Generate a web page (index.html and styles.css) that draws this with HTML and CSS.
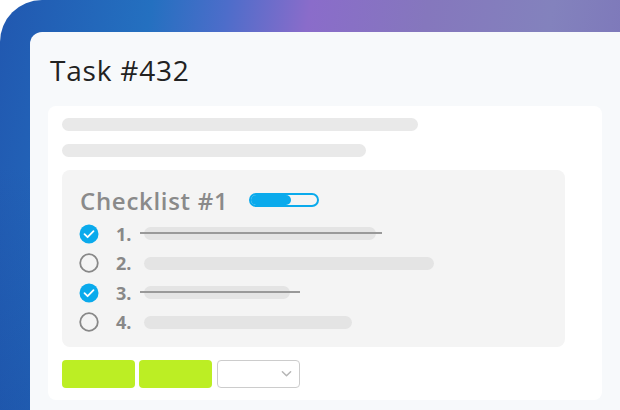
FILE: index.html
```html
<!DOCTYPE html>
<html>
<head>
<meta charset="utf-8">
<link rel="stylesheet" href="styles.css">
</head>
<body>
<div class="backdrop">
  <div class="card">
    <h1 class="title">Task #432</h1>
    <div class="panel">
      <div class="skel skel-1"></div>
      <div class="skel skel-2"></div>
      <div class="checklist">
        <div class="cl-head">
          <span class="cl-title">Checklist #1</span>
          <span class="progress"><span class="progress-fill"></span></span>
        </div>
        <div class="item">
          <svg class="box" viewBox="0 0 20 20"><circle cx="10" cy="10" r="9.5" fill="#0aaaec"/><polyline points="5.5,10.2 8.6,13.2 14.5,7.2" fill="none" stroke="#fff" stroke-width="1.8" stroke-linecap="round" stroke-linejoin="round"/></svg>
          <span class="num">1.</span>
          <span class="bar done" style="width:232px"></span>
        </div>
        <div class="item">
          <svg class="box" viewBox="0 0 20 20"><circle cx="10" cy="10" r="8.8" fill="none" stroke="#888" stroke-width="1.8"/></svg>
          <span class="num">2.</span>
          <span class="bar" style="width:290px"></span>
        </div>
        <div class="item">
          <svg class="box" viewBox="0 0 20 20"><circle cx="10" cy="10" r="9.5" fill="#0aaaec"/><polyline points="5.5,10.2 8.6,13.2 14.5,7.2" fill="none" stroke="#fff" stroke-width="1.8" stroke-linecap="round" stroke-linejoin="round"/></svg>
          <span class="num">3.</span>
          <span class="bar done short" style="width:146px"></span>
        </div>
        <div class="item">
          <svg class="box" viewBox="0 0 20 20"><circle cx="10" cy="10" r="8.8" fill="none" stroke="#888" stroke-width="1.8"/></svg>
          <span class="num">4.</span>
          <span class="bar" style="width:208px"></span>
        </div>
      </div>
      <div class="actions">
        <span class="btn"></span>
        <span class="btn"></span>
        <span class="select">
          <svg class="chev" viewBox="0 0 12 8"><polyline points="1.5,1.5 6,6 10.5,1.5" fill="none" stroke="#b5b5b5" stroke-width="1.6" stroke-linecap="round" stroke-linejoin="round"/></svg>
        </span>
      </div>
    </div>
  </div>
</div>
</body>
</html>
```

FILE: styles.css
```css
* { box-sizing: border-box; }
html, body { margin: 0; padding: 0; background: #ffffff; }
body { width: 620px; height: 410px; overflow: hidden; font-family: "Open Sans", "Noto Sans", sans-serif; }

.backdrop {
  width: 620px;
  height: 410px;
  border-top-left-radius: 42px;
  padding: 32px 0 0 30px;
  background:
    linear-gradient(180deg, rgba(20,40,120,0) 40%, rgba(20,50,140,0.25) 100%),
    linear-gradient(100deg, #2158b0 0%, #2470c0 22%, #4d6dca 33%, #8a6cca 45%, #8577bd 62%, #8382bd 80%, #7a72b8 100%);
  display: flex;
}

.card {
  flex: 1;
  background: #f7f9fb;
  border-top-left-radius: 12px;
  padding: 0 18px 0 18px;
  display: flex;
  flex-direction: column;
}

.title {
  margin: 0;
  padding: 20px 0 0 2px;
  height: 74px;
  font-weight: 400;
  font-size: 28px;
  line-height: 36px;
  color: #222;
  letter-spacing: 0.8px;
}

.panel {
  background: #ffffff;
  border-radius: 8px;
  padding: 12px 14px 12px 14px;
  display: flex;
  flex-direction: column;
  gap: 13px;
  width: 554px;
}

.skel { height: 13px; border-radius: 7px; background: #e9e9e9; }
.skel-1 { width: 356px; }
.skel-2 { width: 304px; }

.checklist {
  width: 503px;
  height: 177px;
  background: #f4f4f4;
  border-radius: 8px;
  padding: 15px 0 0 17px;
  display: flex;
  flex-direction: column;
}

.cl-head {
  display: flex;
  align-items: center;
  height: 30px;
  margin-bottom: 4px;
}
.cl-title {
  font-weight: 600;
  font-size: 24px;
  letter-spacing: 0.7px;
  color: #8a8a8a;
  margin-left: 1px;
}
.progress {
  margin-left: 21px;
  width: 70px;
  height: 14px;
  border: 2px solid #0aaaec;
  border-radius: 7px;
  display: flex;
  overflow: hidden;
}
.progress-fill { width: 40px; height: 100%; background: #0aaaec; border-radius: 0 5px 5px 0; }

.item {
  display: flex;
  align-items: center;
  height: 29.5px;
}
.box { width: 20px; height: 20px; flex: none; }
.num {
  width: 28px;
  margin-left: 17px;
  font-weight: 700;
  font-size: 18px;
  color: #888;
}
.bar {
  position: relative;
  height: 13px;
  border-radius: 7px;
  background: #e4e4e4;
}
.bar.done::after {
  content: "";
  position: absolute;
  left: -4px;
  right: -6px;
  top: 5px;
  height: 2px;
  background: #999;
}
.bar.done.short::after { right: -10px; }

.actions {
  display: flex;
  gap: 4px;
  height: 28px;
}
.btn { width: 73px; height: 28px; border-radius: 4px; background: #bcee24; }
.select {
  margin-left: 1px;
  width: 83px;
  height: 28px;
  border: 1px solid #cccccc;
  border-radius: 4px;
  background: #fff;
  display: flex;
  align-items: center;
  justify-content: flex-end;
  padding-right: 7px;
}
.chev { width: 11px; height: 8px; }
```
